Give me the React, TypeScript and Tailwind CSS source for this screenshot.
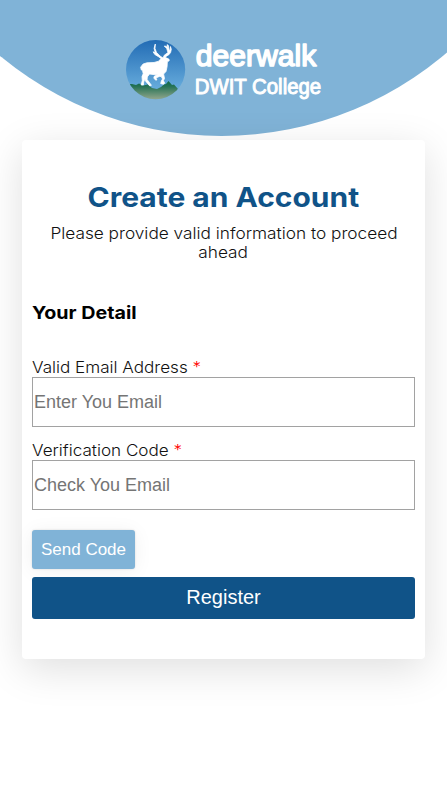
import React from "react";

function Logo() {
  return (
    <svg viewBox="0 0 200 64" className="h-16 w-[200px] overflow-visible" role="img" aria-label="deerwalk DWIT College">
      <defs>
        <linearGradient id="sky" x1="0" y1="0" x2="0" y2="1">
          <stop offset="0" stopColor="#1f69b3" />
          <stop offset="0.8" stopColor="#67acdc" />
        </linearGradient>
        <linearGradient id="hill" gradientUnits="userSpaceOnUse" x1="0" y1="44" x2="0" y2="61">
          <stop offset="0" stopColor="#126a49" />
          <stop offset="0.25" stopColor="#257255" />
          <stop offset="1" stopColor="#8fa58b" />
        </linearGradient>
        <clipPath id="disc">
          <circle cx="31.6" cy="31.6" r="29.6" />
        </clipPath>
      </defs>
      <g clipPath="url(#disc)">
        <rect width="64" height="64" fill="url(#sky)" />
        <path
          d="M0 46 L8 46 L12 47 L15 45.5 L19 47.5 L24 46.5 L28 50 L33 51 L37 49 L40 46.5 L42 46 L44.5 43 L48 47 L50 46.5 L54 51 L57 50.5 L64 54 V64 H0Z"
          fill="url(#hill)"
        />
      </g>
      <path
        fill="#fff"
        stroke="#fff"
        strokeWidth="0.8"
        strokeLinejoin="round"
        d="M31.3 6 L31 10.5 L32.4 14.3 L36 18 L39 20 L40.3 17.2 L44 14.6 L42.7 10.5 L40.3 8 L42 8.3 L43.6 9.6 L43 6.7 L44.2 7.2 L45.4 12.5 L46.3 11.5 L46.4 8.5 L47.3 11.2 L46.6 14.5 L44.9 16.7 L42.2 18.2 L41.5 19.6 L44.8 21 L45.3 22.5 L43.3 24 L43.1 28.5 L42 33.5 L39.6 36 L40.5 40.5 L39.4 42.6 L40.7 45.3 L39.3 46.3 L36.7 45.5 L37.5 42.6 L38.6 41 L37.2 38.5 L35.4 38.4 L31.9 40 L32.9 41.8 L31.8 42.3 L29.9 40.2 L30 38.6 L33.7 36.2 L30.7 36.7 L25.5 36 L23.3 38.9 L23.1 41.5 L27.4 47.3 L25.8 48 L21.8 43.4 L20.9 41 L19.7 44 L19.4 47 L17.2 47 L18.3 42.5 L18 38.6 L19.2 35.8 L18.5 32.3 L17.3 32 L16.6 29.2 L19.1 26 L23 24.8 L30 24.5 L34.7 23.2 L37 20.5 L34.5 18.7 L30.8 16.5 L29.1 13.8 L31.2 14.8 L30.1 10.3Z"
      />
      <g fill="#fff" stroke="#fff" strokeLinejoin="round" fontFamily="'Liberation Sans', Arial, sans-serif">
        <text x="71.7" y="28.4" fontSize="29.5" strokeWidth="1.5" textLength="120.5" lengthAdjust="spacingAndGlyphs">
          deerwalk
        </text>
        <text x="70.7" y="56.3" fontSize="22.5" strokeWidth="1" textLength="126.5" lengthAdjust="spacingAndGlyphs">
          DWIT College
        </text>
      </g>
    </svg>
  );
}

type FieldProps = { id: string; label: string; placeholder: string };

function Field({ id, label, placeholder }: FieldProps) {
  return (
    <div className="flex flex-col">
      <label htmlFor={id} className="h-5 pt-px text-[15.4px] leading-5 font-light whitespace-nowrap text-[#111]">
        <span className="inline-block origin-left scale-x-[1.11]">
          {label} <span className="text-[#f00]">*</span>
        </span>
      </label>
      <input
        id={id}
        placeholder={placeholder}
        className="h-[50px] w-full border border-[#a2a2a2] bg-white px-px font-['Liberation_Sans',Arial,sans-serif] text-lg text-black outline-none placeholder:text-[#757575]"
      />
    </div>
  );
}

export default function App() {
  return (
    <div className="h-[796px] w-full overflow-hidden bg-white font-[Inter,sans-serif]">
      <header className="flex h-[140px] justify-center overflow-hidden">
        <div className="-mt-[557px] mr-1 flex h-[693px] w-[693px] shrink-0 items-end justify-center rounded-full bg-[#80b3d7] pb-[34px] pl-1">
          <Logo />
        </div>
      </header>
      <main className="relative mx-[22px] flex h-[519px] flex-col rounded bg-white px-2.5 shadow-[0_10px_40px_rgba(0,0,0,0.13)]">
        <h1 className="mt-[41px] h-[33px] text-center text-[27px] leading-[33px] font-bold whitespace-nowrap text-[#105388]">
          <span className="inline-block scale-x-[1.11]">Create an Account</span>
        </h1>
        <p className="mt-2.5 text-center text-[15.4px] leading-[19px] font-light whitespace-nowrap text-[#111]">
          <span className="inline-block scale-x-[1.12]">Please provide valid information to proceed</span>
          <br />
          <span className="inline-block scale-x-[1.12]">ahead</span>
        </p>
        <h2 className="mt-10 h-[22px] text-[17.5px] leading-[22px] font-bold text-black">
          <span className="inline-block origin-left scale-x-[1.125]">Your Detail</span>
        </h2>
        <form className="mt-[33px] flex flex-col" onSubmit={(e) => e.preventDefault()}>
          <div className="flex flex-col gap-[13px]">
            <Field id="email" label="Valid Email Address" placeholder="Enter You Email" />
            <Field id="code" label="Verification Code" placeholder="Check You Email" />
          </div>
          <button
            type="button"
            className="mt-5 h-[39px] w-[103px] rounded-[3px] bg-[#80b3d7] font-['Liberation_Sans',Arial,sans-serif] text-[17px] text-white shadow-[0_0_2px_rgba(0,0,0,0.15),0_2px_20px_rgba(0,0,0,0.06)]"
          >
            Send Code
          </button>
          <button
            type="submit"
            className="mt-2 h-[42px] w-full rounded-[3px] bg-[#105388] pb-0.5 font-['Liberation_Sans',Arial,sans-serif] text-xl text-white"
          >
            Register
          </button>
        </form>
      </main>
    </div>
  );
}
